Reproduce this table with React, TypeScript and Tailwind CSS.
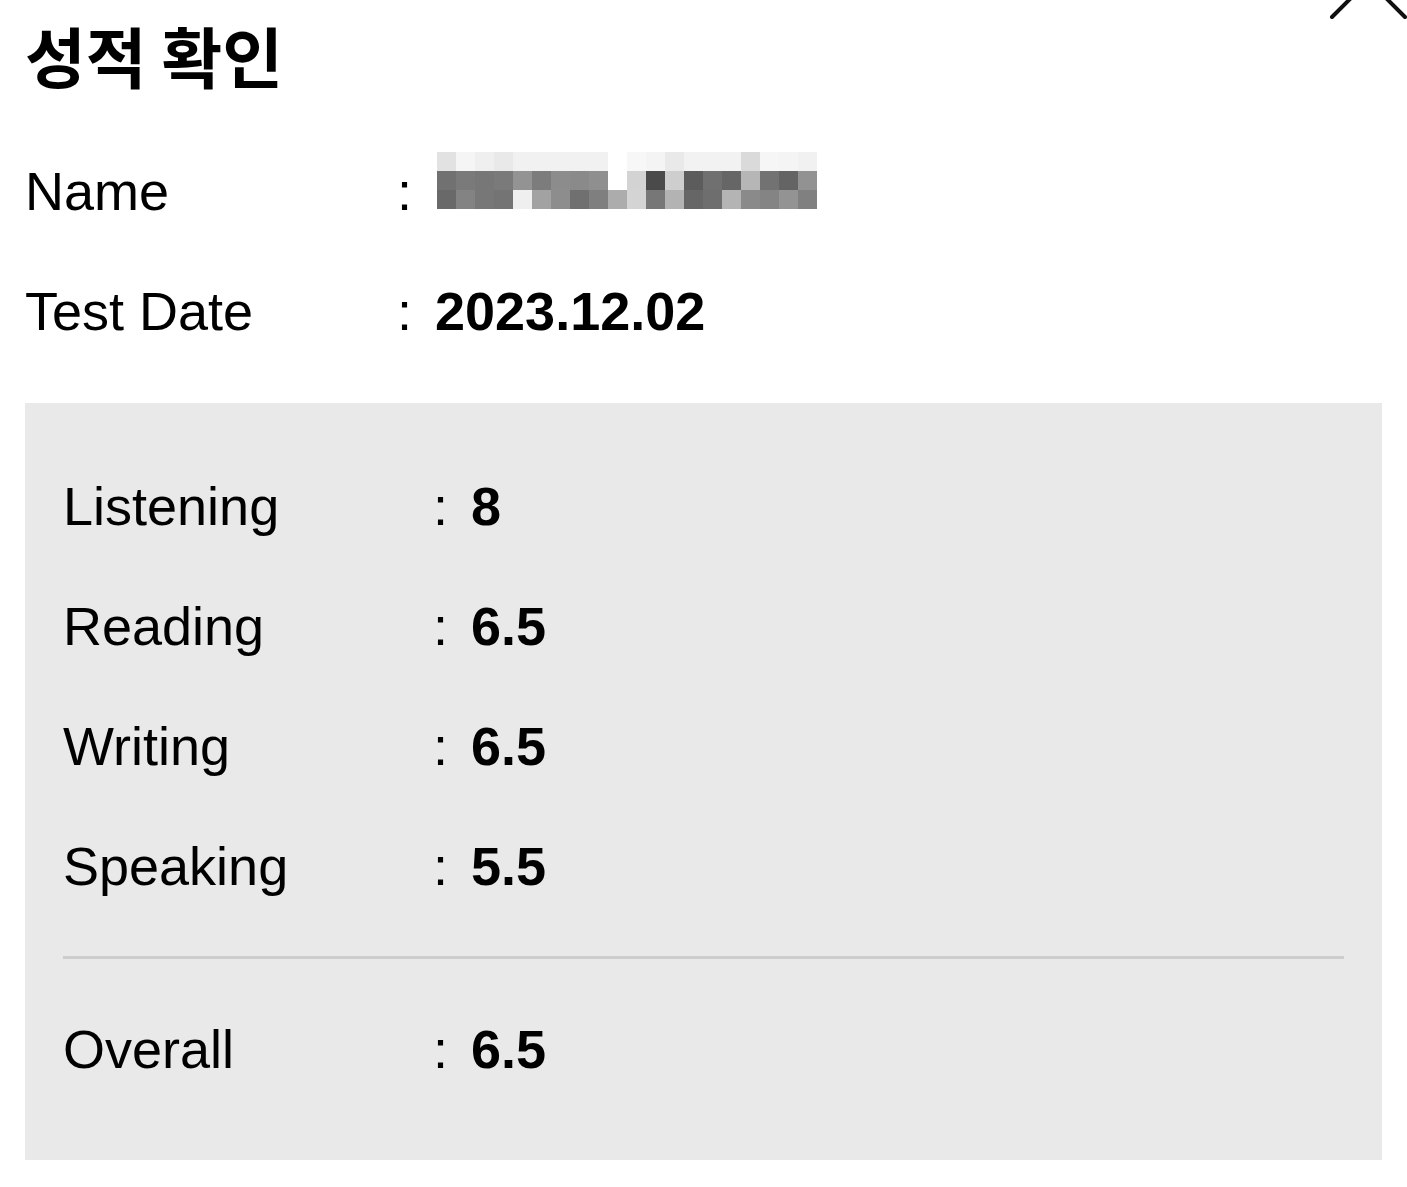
const rows = [
  { label: "Listening", value: "8" },
  { label: "Reading", value: "6.5" },
  { label: "Writing", value: "6.5" },
  { label: "Speaking", value: "5.5" },
];

const sans = "font-['Liberation_Sans',Arial,sans-serif]";

// blurred name block, drawn as mosaic tiles
const mosaic = [
  ["#e2e2e2", "#f5f5f5", "#efefef", "#e9e9e9", "#f1f1f1", "#f1f1f1", "#f1f1f1", "#f1f1f1", "#f1f1f1", "#fff", "#f7f7f7", "#f4f4f4", "#e9e9e9", "#f2f2f2", "#f2f2f2", "#f2f2f2", "#dadada", "#f6f6f6", "#f4f4f4", "#f1f1f1"],
  ["#717171", "#7a7a7a", "#777777", "#7a7a7a", "#939393", "#7c7c7c", "#8c8c8c", "#8a8a8a", "#8f8f8f", "#fff", "#d3d3d3", "#4a4a4a", "#cecece", "#5c5c5c", "#707070", "#666666", "#b6b6b6", "#727272", "#646464", "#929292"],
  ["#696969", "#838383", "#777777", "#747474", "#efefef", "#a2a2a2", "#8d8d8d", "#707070", "#7f7f7f", "#acacac", "#d4d4d4", "#777777", "#b3b3b3", "#666666", "#6e6e6e", "#b4b4b4", "#8a8a8a", "#848484", "#939393", "#808080"],
];

function Row({
  label,
  value,
  labelW,
  children,
}: {
  label: string;
  value?: string;
  labelW: string;
  children?: React.ReactNode;
}) {
  return (
    <div className={`flex items-center h-[120px] leading-[120px] text-[54px] text-black ${sans}`}>
      <div className={labelW}>{label}</div>
      <div>:</div>
      <div className="ml-[23px] font-bold">{children ?? value}</div>
    </div>
  );
}

export default function App() {
  return (
    <div className="relative w-[1407px] h-[1187px] bg-white overflow-hidden pl-[25px] pr-[25px]">
      <svg
        className="absolute top-0 right-0"
        width="80"
        height="24"
        viewBox="0 0 80 24"
        fill="none"
      >
        <line x1="5" y1="17" x2="45" y2="-23" stroke="#111" strokeWidth="4" strokeLinecap="round" />
        <line x1="78" y1="17" x2="38" y2="-23" stroke="#111" strokeWidth="4" strokeLinecap="round" />
      </svg>

      <h1 className="pt-[21px] h-[87px] text-[66px] leading-[66px] font-bold text-black font-['Noto_Sans_CJK_KR',sans-serif]">
        성적 확인
      </h1>

      <div className="mt-[44px]">
        <Row label="Name" labelW="w-[372px]">
          <div className="flex flex-col mt-[-22px] ml-[2px]">
            {mosaic.map((line, i) => (
              <div key={i} className="flex">
                {line.map((c, j) => (
                  <div key={j} className="w-[19px] h-[19px]" style={{ background: c }} />
                ))}
              </div>
            ))}
          </div>
        </Row>
        <Row label="Test Date" value="2023.12.02" labelW="w-[372px]" />
      </div>

      <div className="mt-[32px] bg-[#e9e9e9] px-[38px] pt-[43px] pb-[51px]">
        <div className="flex flex-col">
          {rows.map((r) => (
            <Row key={r.label} label={r.label} value={r.value} labelW="w-[370px]" />
          ))}
        </div>
        <div className="mt-[30px] h-[3px] bg-[#cdcdcd]" />
        <div className="mt-[30px]">
          <Row label="Overall" value="6.5" labelW="w-[370px]" />
        </div>
      </div>
    </div>
  );
}
